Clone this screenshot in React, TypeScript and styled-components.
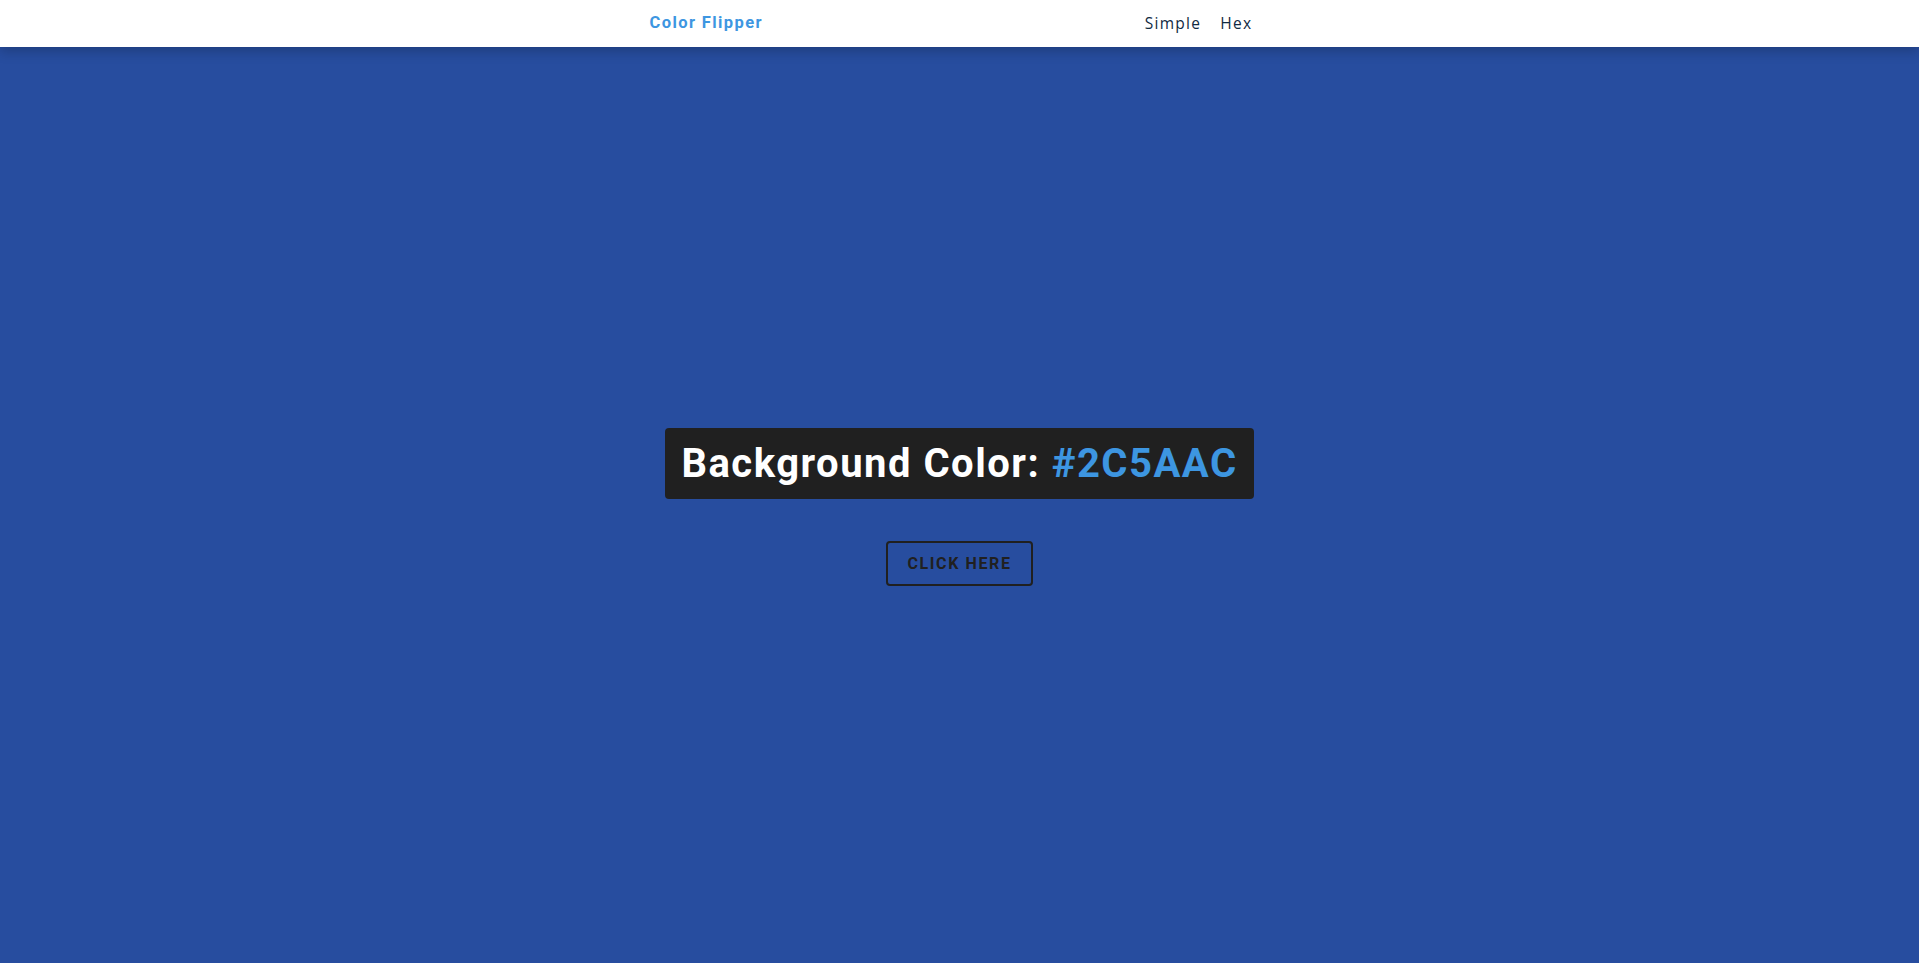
import React from "react";
import styled, { createGlobalStyle } from "styled-components";

const Global = createGlobalStyle`
  * { box-sizing: border-box; margin: 0; padding: 0; }
  html, body { width: 100%; height: 100%; }
  body {
    margin: 0;
    background: #274d9f;
    font-family: "Open Sans", sans-serif;
    overflow: hidden;
  }
`;

const Nav = styled.nav`
  position: relative;
  z-index: 1;
  height: 47px;
  background: #ffffff;
  display: flex;
  align-items: center;
  box-shadow: 0 4px 12px rgba(0, 0, 0, 0.22);
`;

const NavCenter = styled.div`
  width: 620px;
  margin: 0 auto;
  display: flex;
  justify-content: space-between;
  align-items: center;
`;

const Brand = styled.h4`
  font-family: Roboto, sans-serif;
  font-weight: 700;
  font-size: 16.5px;
  letter-spacing: 1.4px;
  color: #3d96e1;
  margin-top: -3px;
`;

const Links = styled.ul`
  list-style: none;
  display: flex;
  gap: 19px;
  margin-right: 17px;
  margin-top: -2px;
`;

const LinkItem = styled.li`
  font-family: "Open Sans", sans-serif;
  font-size: 15.5px;
  letter-spacing: 1.3px;
  color: #102a42;
`;

const Main = styled.main`
  height: calc(100vh - 47px);
  display: flex;
  flex-direction: column;
  align-items: center;
  justify-content: center;
  gap: 42px;
  padding-top: 4px;
`;

const Heading = styled.h2`
  background: #202020;
  color: #ffffff;
  font-family: Roboto, sans-serif;
  font-weight: 700;
  font-size: 40px;
  line-height: 47px;
  letter-spacing: 1.5px;
  padding: 12px 16px;
  border-radius: 4px;
  white-space: nowrap;
`;

const ColorText = styled.span`
  color: #3d96e1;
`;

const HeroButton = styled.button`
  font-family: Roboto, sans-serif;
  text-transform: uppercase;
  background: transparent;
  color: #202020;
  letter-spacing: 1.6px;
  font-weight: 700;
  font-size: 16px;
  line-height: 17px;
  border: 2px solid #202020;
  padding: 12px 20px;
  border-radius: 4px;
  cursor: pointer;
`;

export default function App() {
  return (
    <>
      <Global />
      <Nav>
        <NavCenter>
          <Brand>Color Flipper</Brand>
          <Links>
            <LinkItem>Simple</LinkItem>
            <LinkItem>Hex</LinkItem>
          </Links>
        </NavCenter>
      </Nav>
      <Main>
        <Heading>
          Background Color: <ColorText>#2C5AAC</ColorText>
        </Heading>
        <HeroButton>click here</HeroButton>
      </Main>
    </>
  );
}
